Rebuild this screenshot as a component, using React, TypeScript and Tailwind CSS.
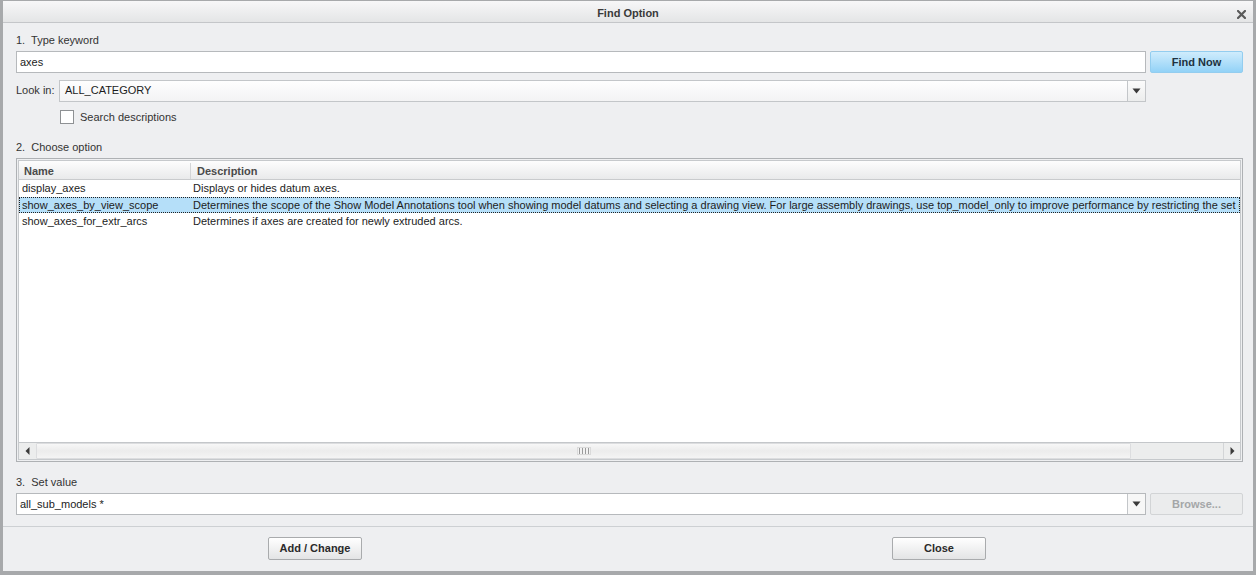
import React from "react";

const rows = [
  { name: "display_axes", desc: "Displays or hides datum axes.", selected: false },
  {
    name: "show_axes_by_view_scope",
    desc: "Determines the scope of the Show Model Annotations tool when showing model datums and selecting a drawing view. For large assembly drawings, use top_model_only to improve performance by restricting the set of models searched for datums.",
    selected: true,
  },
  { name: "show_axes_for_extr_arcs", desc: "Determines if axes are created for newly extruded arcs.", selected: false },
];

function DownArrow() {
  return (
    <svg width="9" height="6" viewBox="0 0 9 6">
      <path d="M0.5 0.5 L8.5 0.5 L4.5 5.5 Z" fill="#3a3a3a" />
    </svg>
  );
}

function ComboArrow() {
  return (
    <div className="flex w-[18px] shrink-0 items-center justify-center border-l border-[#c3c6c9] bg-gradient-to-b from-[#fbfbfb] to-[#eceded]">
      <DownArrow />
    </div>
  );
}

function PlainButton({ children, className = "" }: { children: React.ReactNode; className?: string }) {
  return (
    <div
      className={
        "flex h-[23px] w-[94px] items-center justify-center rounded-[2px] border border-[#a9abad] bg-gradient-to-b from-[#ffffff] to-[#e3e4e5] text-[11px] font-bold text-[#2a2a2a] " +
        className
      }
    >
      {children}
    </div>
  );
}

export default function App() {
  return (
    <div className="flex h-[575px] w-[1256px] flex-col border-x-[3px] border-b-[4px] border-t border-[#a7a9ab] bg-[#eeeff1] font-['Liberation_Sans',Arial,sans-serif] text-[11px] text-[#262626]">
      {/* Title bar */}
      <div className="relative flex h-[22px] shrink-0 items-center justify-center border-b border-[#c4c6c9] bg-gradient-to-b from-[#f7f7f8] to-[#e4e5e6] pt-[3px]">
        <span className="font-bold text-[#3a3a3a]">Find Option</span>
        <svg className="absolute right-[7px] top-[9px]" width="9" height="9" viewBox="0 0 9 9">
          <path d="M1 1 L8 8 M8 1 L1 8" stroke="#5a5a5a" strokeWidth="2.2" strokeLinecap="square" />
        </svg>
      </div>

      {/* Body */}
      <div className="flex flex-col pl-[13px] pr-[10px] pt-[10px]">
        <div className="h-[14px] whitespace-pre leading-[14px] text-[#333]">{"1.  Type keyword"}</div>

        <div className="mt-[4px] flex h-[22px] gap-[4px]">
          <div className="flex flex-1 items-center border border-[#b6b9bc] bg-white pl-[3px] text-[#1c1c1c]">axes</div>
          <div className="flex w-[93px] items-center justify-center rounded-[2px] border border-[#93cdef] bg-gradient-to-b from-[#cfecfc] to-[#92d2f7] font-bold text-[#203240]">
            Find Now
          </div>
        </div>

        <div className="mt-[7px] flex h-[22px] pr-[97px]">
          <div className="flex w-[43px] items-center pb-px text-[#333]">Look in:</div>
          <div className="flex flex-1 border border-[#c3c6c9] bg-gradient-to-b from-[#fefefe] to-[#f3f3f4]">
            <div className="flex flex-1 items-center pb-px pl-[5px] text-[#1c1c1c]">ALL_CATEGORY</div>
            <ComboArrow />
          </div>
        </div>

        <div className="mt-[8px] flex h-[14px] items-center pl-[44px]">
          <div className="h-[14px] w-[14px] border border-[#8e9194] bg-white" />
          <span className="ml-[6px] text-[#333]">Search descriptions</span>
        </div>

        <div className="mt-[16px] h-[14px] whitespace-pre leading-[14px] text-[#333]">{"2.  Choose option"}</div>

        {/* Options table */}
        <div className="mt-[4px] h-[304px] border border-[#aeb1b4] bg-[#eeeff1] p-px">
          <div className="flex h-full flex-col border border-[#c6c9cc] bg-white">
            <div className="flex h-[19px] shrink-0 border-b border-[#c9cbcd] bg-gradient-to-b from-[#fdfdfd] to-[#e9eaeb] pt-[2px] font-bold text-[#4a4a4a]">
              <div className="flex w-[172px] items-center border-r border-[#d3d5d7] pl-[5px]">Name</div>
              <div className="flex flex-1 items-center pl-[6px]">Description</div>
            </div>

            <div className="flex flex-1 flex-col overflow-hidden">
              {rows.map((r) => (
                <div
                  key={r.name}
                  className={
                    "flex h-[16px] shrink-0 items-center whitespace-nowrap " +
                    (r.selected ? "mt-px border border-dotted border-[#222] bg-[#b5dff9]" : "border border-transparent")
                  }
                >
                  <div className="w-[172px] shrink-0 overflow-hidden pl-[2px] text-[#1c1c1c]">{r.name}</div>
                  <div className="flex-1 overflow-hidden pl-[1px] text-[#1c1c1c]">{r.desc}</div>
                </div>
              ))}
            </div>

            {/* Horizontal scrollbar */}
            <div className="flex h-[17px] shrink-0 border-t border-[#c4c7ca] bg-[#eceded]">
              <div className="flex w-[17px] items-center justify-center">
                <svg width="5" height="8" viewBox="0 0 5 8">
                  <path d="M4.5 0 L4.5 8 L0.5 4 Z" fill="#3a3a3a" />
                </svg>
              </div>
              <div className="flex flex-1">
                <div className="flex w-[1095px] items-center justify-center rounded-[1px] border border-[#dcdddf] bg-gradient-to-b from-[#f7f7f7] via-[#ececec] to-[#f4f4f4]">
                  <div className="flex h-[8px] gap-[2px] border border-[#dadada] bg-[#f2f2f2] px-[1px]">
                    <div className="w-px bg-[#9a9a9a]" />
                    <div className="w-px bg-[#9a9a9a]" />
                    <div className="w-px bg-[#9a9a9a]" />
                    <div className="w-px bg-[#9a9a9a]" />
                  </div>
                </div>
                <div className="flex-1" />
              </div>
              <div className="flex w-[17px] items-center justify-center border-l border-[#d3d5d7]">
                <svg width="5" height="8" viewBox="0 0 5 8">
                  <path d="M0.5 0 L0.5 8 L4.5 4 Z" fill="#3a3a3a" />
                </svg>
              </div>
            </div>
          </div>
        </div>

        <div className="mt-[13px] h-[14px] whitespace-pre leading-[14px] text-[#333]">{"3.  Set value"}</div>

        <div className="mt-[4px] flex h-[22px] gap-[4px]">
          <div className="flex flex-1 border border-[#b6b9bc] bg-white">
            <div className="flex flex-1 items-center pl-[3px] text-[#1c1c1c]">all_sub_models *</div>
            <div className="flex w-[18px] shrink-0 items-center justify-center border-l border-[#c3c6c9] bg-[#f7f7f7]">
              <DownArrow />
            </div>
          </div>
          <div className="flex w-[93px] items-center justify-center rounded-[2px] border border-[#d2d4d6] bg-[#ebeced] font-bold text-[#a4a6a8]">
            Browse...
          </div>
        </div>
      </div>

      {/* Footer */}
      <div className="mt-[11px] flex flex-1 items-center border-t border-[#cdd0d3] pb-px">
        <PlainButton className="ml-[265px]">Add / Change</PlainButton>
        <PlainButton className="ml-[530px]">Close</PlainButton>
      </div>
    </div>
  );
}
